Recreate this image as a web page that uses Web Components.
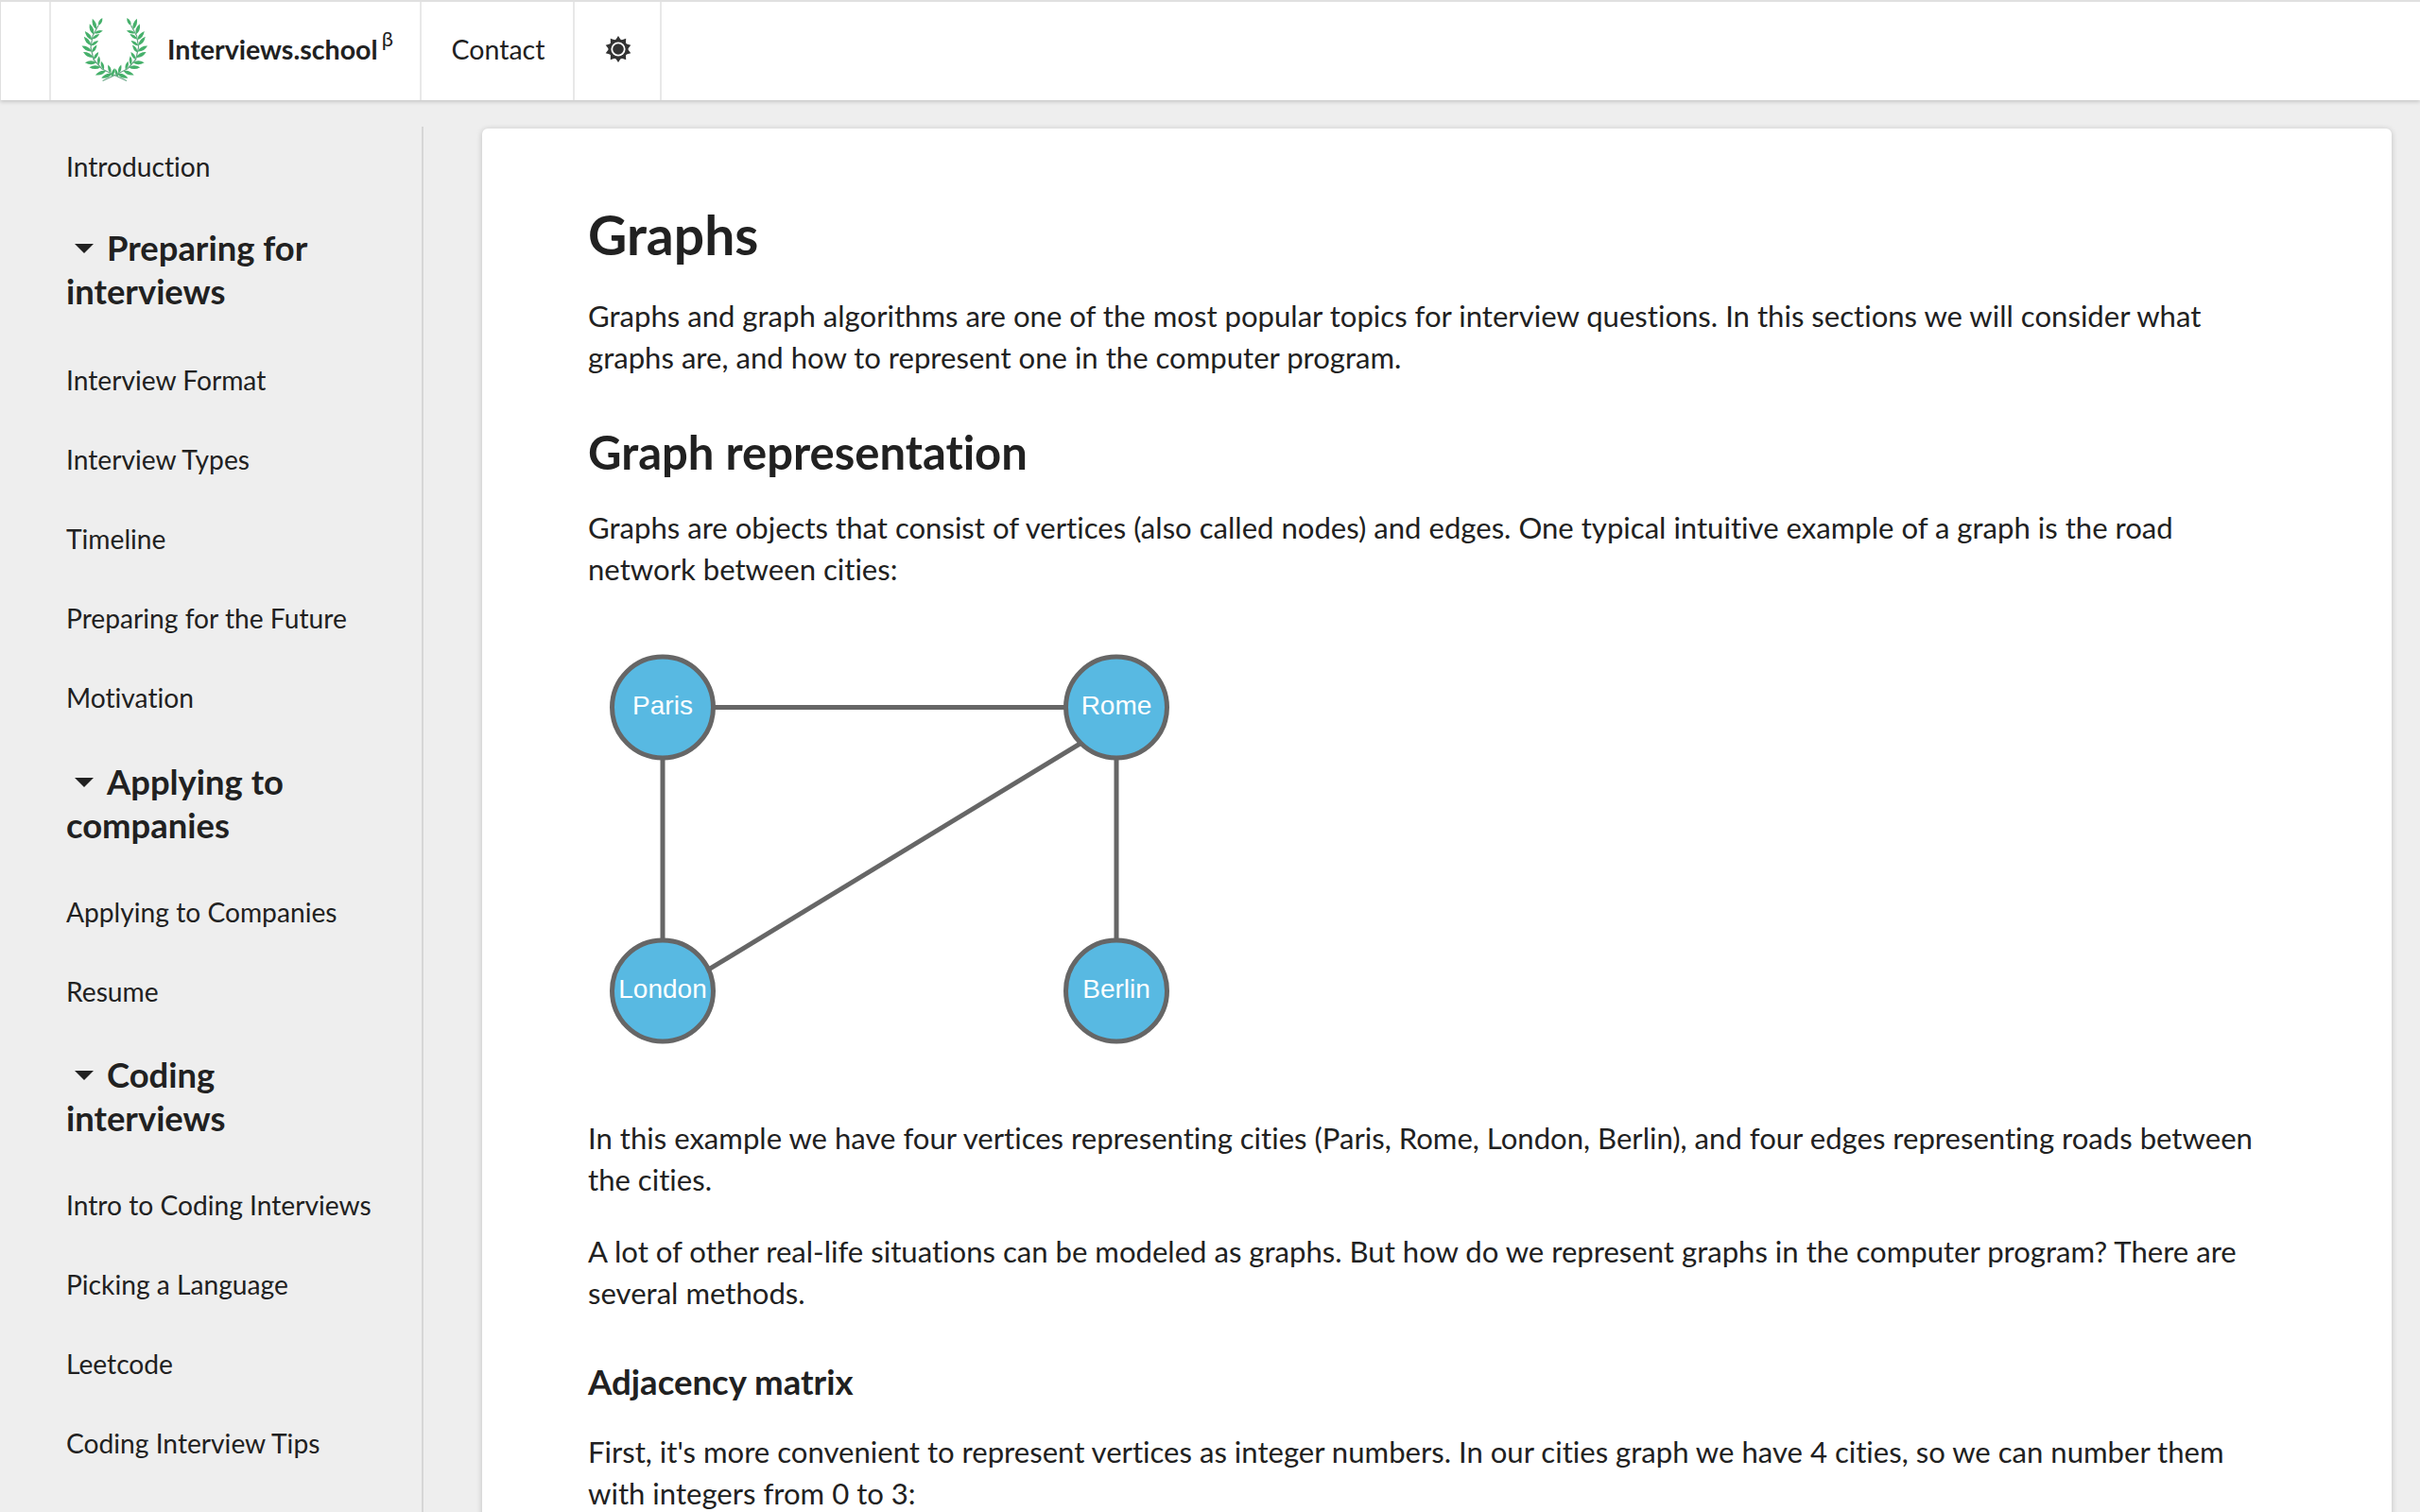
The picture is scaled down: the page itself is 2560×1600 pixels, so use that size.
<!DOCTYPE html>
<html>
<head>
<meta charset="utf-8">
<title>Graphs</title>
<style>
  html, body { margin: 0; padding: 0; height: 1600px; overflow: hidden; background: #eeeeee; }
  body { font-family: Lato, "Liberation Sans", sans-serif; color: #212121; font-variant-ligatures: none; }
</style>
</head>
<body>
<school-page>
  <top-nav slot="nav"></top-nav>
  <side-menu slot="side">
    <side-link>Introduction</side-link>
    <side-group>Preparing for interviews</side-group>
    <side-link>Interview Format</side-link>
    <side-link>Interview Types</side-link>
    <side-link>Timeline</side-link>
    <side-link>Preparing for the Future</side-link>
    <side-link>Motivation</side-link>
    <side-group>Applying to companies</side-group>
    <side-link>Applying to Companies</side-link>
    <side-link>Resume</side-link>
    <side-group>Coding interviews</side-group>
    <side-link>Intro to Coding Interviews</side-link>
    <side-link>Picking a Language</side-link>
    <side-link>Leetcode</side-link>
    <side-link>Coding Interview Tips</side-link>
  </side-menu>
  <article-card slot="main">
    <h1>Graphs</h1>
    <p>Graphs and graph algorithms are one of the most popular topics for interview questions. In this sections we will consider what graphs are, and how to represent one in the computer program.</p>
    <h2>Graph representation</h2>
    <p>Graphs are objects that consist of vertices (also called nodes) and edges. One typical intuitive example of a graph is the road network between cities:</p>
    <graph-figure></graph-figure>
    <p>In this example we have four vertices representing cities (Paris, Rome, London, Berlin), and four edges representing roads between the cities.</p>
    <p>A lot of other real-life situations can be modeled as graphs. But how do we represent graphs in the computer program? There are several methods.</p>
    <h3>Adjacency matrix</h3>
    <p>First, it's more convenient to represent vertices as integer numbers. In our cities graph we have 4 cities, so we can number them with integers from 0 to 3:</p>
  </article-card>
</school-page>

<script>
class SchoolPage extends HTMLElement {
  constructor() {
    super();
    this.attachShadow({ mode: 'open' });
    this.shadowRoot.innerHTML = `
      <style>
        :host { display: block; height: 1600px; overflow: hidden; }
        .body {
          display: grid;
          grid-template-columns: 448px 1fr;
          padding-top: 28px;
        }
        .main { padding: 2px 30px 0 62px; }
      </style>
      <slot name="nav"></slot>
      <div class="body">
        <slot name="side"></slot>
        <div class="main"><slot name="main"></slot></div>
      </div>
    `;
  }
}

class TopNav extends HTMLElement {
  constructor() {
    super();
    this.attachShadow({ mode: 'open' });
    this.shadowRoot.innerHTML = `
      <style>
        :host {
          display: flex;
          box-sizing: border-box;
          height: 106px;
          background: #fff;
          border-top: 2px solid #e0e0e0;
          border-left: 1px solid #e0e0e0;
          box-shadow: 0 2px 4px rgba(0,0,0,.16);
          position: relative;
          font-size: 28.5px;
          color: #212121;
        }
        .cell {
          display: flex;
          flex: none;
          align-items: center;
          box-sizing: border-box;
          border-right: 2px solid #e8e8e8;
          height: 100%;
          padding-bottom: 4px;
        }
        .pad { width: 53px; }
        .brand { width: 392px; padding-left: 31px; gap: 18px; padding-bottom: 2px; }
        .brand b { font-weight: 700; white-space: nowrap; font-size: 28.6px; position: relative; top: -1px; }
        .brand sup { font-size: 22px; font-weight: 400; line-height: 0; position: relative; top: -3px; margin-left: 4px; vertical-align: super; }
        .contact { width: 162px; justify-content: center; padding-left: 2px; }
        .theme { width: 92px; justify-content: center; padding-left: 2px; }
        svg { display: block; flex: none; }
      </style>
      <div class="cell pad"></div>
      <div class="cell brand">
        <svg id="laurel" width="74" height="68" viewBox="14 9 74 68"></svg>
        <b>Interviews.school<sup>β</sup></b>
      </div>
      <div class="cell contact">Contact</div>
      <div class="cell theme">
        <svg id="sun" width="28" height="28" viewBox="-14 -14 28 28"></svg>
      </div>
    `;
  }

  connectedCallback() {
    this.drawLaurel();
    this.drawSun();
  }

  drawLaurel() {
    // stem of the left branch, from the crossing at the bottom up to the tip
    const stem = [[63, 75.5], [50, 69.5], [37, 63], [28, 53], [25, 40], [27, 28], [33, 17]];
    const at = (t) => {
      const p = t * (stem.length - 1);
      const i = Math.min(Math.floor(p), stem.length - 2);
      const f = p - i;
      const [a, b] = [stem[i], stem[i + 1]];
      return { x: a[0] + (b[0] - a[0]) * f, y: a[1] + (b[1] - a[1]) * f, dir: Math.atan2(b[1] - a[1], b[0] - a[0]) * 180 / Math.PI };
    };
    const leaf = (t, turn, len, w) => {
      const p = at(t);
      return `<path d="M0 0Q${len * .45} ${-w} ${len} 0Q${len * .45} ${w} 0 0Z" transform="translate(${p.x} ${p.y}) rotate(${p.dir + turn})"/>`;
    };
    let leaves = '';
    for (let i = 0; i < 10; i++) leaves += leaf(0.2 + i * 0.082, -48, 12, 3.8); // outer row
    for (let i = 0; i < 9; i++) leaves += leaf(0.12 + i * 0.095, 46, 9.5, 3); // inner row
    leaves += leaf(1, 0, 9, 3.2);
    const points = stem.map(p => p.join(' ')).join(' ');
    const branch = `<polyline points="${points}" fill="none" stroke="#6aa587" stroke-width="1.2" stroke-linejoin="round"/><g fill="#46b06b">${leaves}</g>`;
    this.shadowRoot.getElementById('laurel').innerHTML =
      `${branch}<g transform="translate(100.6 0) scale(-1 1)">${branch}</g>`;
  }

  drawSun() {
    let teeth = '';
    for (let i = 0; i < 10; i++) {
      teeth += `<path d="M-3 -9.5L0 -14L3 -9.5Z" transform="rotate(${i * 36})"/>`;
    }
    this.shadowRoot.getElementById('sun').innerHTML = `
      <g fill="#333">${teeth}<circle r="10.5"/></g>
      <circle r="7.6" fill="#fff"/><circle r="5.8" fill="#333"/>`;
  }
}

class SideMenu extends HTMLElement {
  constructor() {
    super();
    this.attachShadow({ mode: 'open' });
    this.shadowRoot.innerHTML = `
      <style>
        :host {
          display: block;
          box-sizing: border-box;
          width: 448px;
          height: 1600px;
          padding: 0 58px 0 70px;
          border-right: 2px solid #d6d6d6;
        }
      </style>
      <slot></slot>
    `;
  }
}

class SideLink extends HTMLElement {
  constructor() {
    super();
    this.attachShadow({ mode: 'open' });
    this.shadowRoot.innerHTML = `
      <style>
        :host {
          display: block;
          font-size: 28.2px;
          line-height: 40px;
          padding: 22px 0;
          color: #212121;
          white-space: nowrap;
        }
        :host(:first-child) { padding-bottom: 19px; }
      </style>
      <slot></slot>
    `;
  }
}

class SideGroup extends HTMLElement {
  constructor() {
    super();
    this.attachShadow({ mode: 'open' });
    this.shadowRoot.innerHTML = `
      <style>
        :host {
          display: block;
          font-size: 36.4px;
          font-weight: 700;
          line-height: 46px;
          padding: 24px 0 27px;
          color: #212121;
        }
        :host(:nth-child(2)) { padding-bottom: 29px; }
        :host(:nth-child(11)) { padding-top: 23px; }
        .caret {
          display: inline-block;
          width: 0;
          height: 0;
          margin: 0 14px 8px 9px;
          border-left: 10px solid transparent;
          border-right: 10px solid transparent;
          border-top: 10px solid #212121;
        }
      </style>
      <span class="caret"></span><slot></slot>
    `;
  }
}

class ArticleCard extends HTMLElement {
  constructor() {
    super();
    this.attachShadow({ mode: 'open' });
    this.shadowRoot.innerHTML = `
      <style>
        :host {
          display: block;
          box-sizing: border-box;
          background: #fff;
          border-radius: 6px;
          box-shadow: 0 1px 6px rgba(0,0,0,.2);
          padding: 76px 112px 40px;
          min-height: 1500px;
          font-size: 31.1px;
          line-height: 44px;
          color: #212121;
        }
        ::slotted(h1) { font-size: 57px; line-height: 72px; font-weight: 700; margin: 0 0 28px; }
        ::slotted(h2) { font-size: 49px; line-height: 60px; font-weight: 700; margin: 48px 0 28px; }
        ::slotted(h3) { font-size: 36.6px; line-height: 46px; font-weight: 700; margin: 49px 0 29px; }
        ::slotted(p) { margin: 0 0 32px; }
      </style>
      <slot></slot>
    `;
  }
}

class GraphFigure extends HTMLElement {
  constructor() {
    super();
    this.attachShadow({ mode: 'open' });
    const nodes = [['Paris', 79, 92.5], ['Rome', 559, 92.5], ['London', 79, 392.5], ['Berlin', 559, 392.5]];
    // the Rome-London road does not run through the centres in the picture
    const edges = [[79, 92.5, 559, 92.5], [79, 92.5, 79, 392.5], [559, 92.5, 559, 392.5], [559, 107.5, 79, 399.5]];
    const lines = edges.map(([a, b, c, d]) => `<line x1="${a}" y1="${b}" x2="${c}" y2="${d}"/>`).join('');
    const circles = nodes.map(([t, x, y]) => `
      <circle cx="${x}" cy="${y}" r="53.5" fill="#58b9e2" stroke="#666" stroke-width="5"/>
      <text x="${x}" y="${y}" text-anchor="middle" dominant-baseline="middle">${t}</text>`).join('');
    this.shadowRoot.innerHTML = `
      <style>
        :host { display: block; height: 494px; margin: 0 0 32px; }
        svg { display: block; }
        line { stroke: #666; stroke-width: 5; }
        text { fill: #fff; font: 28px "Liberation Sans", Arial, sans-serif; }
      </style>
      <svg width="640" height="494" viewBox="0 0 640 494">${lines}${circles}</svg>
    `;
  }
}

customElements.define('school-page', SchoolPage);
customElements.define('top-nav', TopNav);
customElements.define('side-menu', SideMenu);
customElements.define('side-link', SideLink);
customElements.define('side-group', SideGroup);
customElements.define('article-card', ArticleCard);
customElements.define('graph-figure', GraphFigure);
</script>
</body>
</html>
